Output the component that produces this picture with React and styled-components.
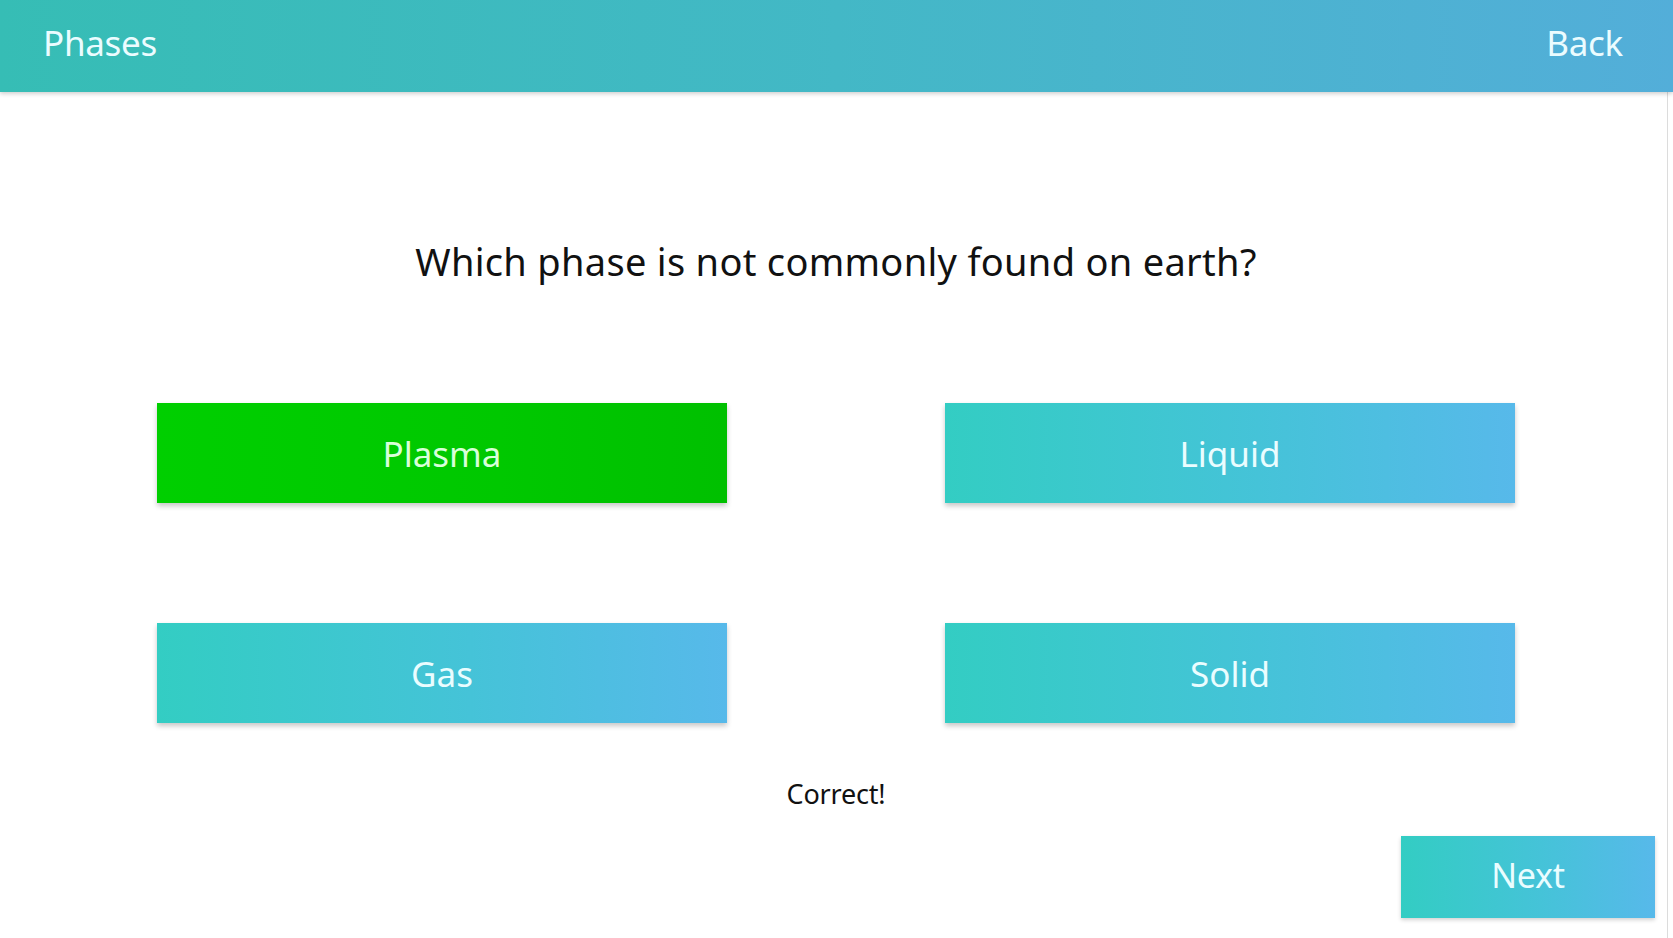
import styled, { createGlobalStyle } from 'styled-components';

const GlobalStyle = createGlobalStyle`
  html, body {
    margin: 0;
    padding: 0;
    background: #ffffff;
  }
  body {
    font-family: 'Noto Sans', 'Open Sans', sans-serif;
  }
`;

const teal = 'linear-gradient(90deg, #33cdc3 0%, #45c3d8 55%, #57b9ea 100%)';

const Screen = styled.div`
  height: 100vh;
  display: flex;
  flex-direction: column;
  overflow: hidden;
`;

const Header = styled.header`
  height: 92px;
  flex-shrink: 0;
  display: flex;
  align-items: center;
  justify-content: space-between;
  padding: 0 50px 0 43px;
  background: linear-gradient(90deg, #36bdb5 0%, #43b8c6 50%, #53aed9 100%);
  box-shadow: 0 2px 4px rgba(0, 0, 0, 0.18);
  position: relative;
  z-index: 1;
`;

const HeaderText = styled.span`
  color: #ebfcff;
  font-size: 35px;
  letter-spacing: -0.3px;
  line-height: 1;
  padding-bottom: 8px;
`;

const Main = styled.main`
  flex: 1;
  margin-right: 5px;
  border-right: 1px solid #dcdcdc;
  display: flex;
  flex-direction: column;
  align-items: center;
  padding: 142px 0 20px 5px;
`;

const Question = styled.h1`
  margin: 0;
  font-weight: 400;
  font-size: 38px;
  line-height: 54px;
  letter-spacing: 0.3px;
  color: #111111;
`;

const Answers = styled.div`
  display: grid;
  grid-template-columns: 570px 570px;
  grid-auto-rows: 100px;
  column-gap: 218px;
  row-gap: 120px;
  margin-top: 115px;
`;

const Answer = styled.button`
  border: none;
  margin: 0;
  padding: 0;
  font-family: inherit;
  font-size: 35px;
  letter-spacing: 0;
  color: ${(p) => (p.$correct ? '#d9ffd9' : '#eafdff')};
  background: ${(p) =>
    p.$correct ? 'linear-gradient(90deg, #00cf00 0%, #00c800 60%, #00c000 100%)' : teal};
  box-shadow: 0 3px 5px rgba(0, 0, 0, 0.22);
  cursor: pointer;
`;

const Feedback = styled.div`
  margin-top: 53px;
  font-size: 27px;
  line-height: 36px;
  letter-spacing: -0.2px;
  color: #111111;
`;

const Footer = styled.div`
  align-self: stretch;
  display: flex;
  justify-content: flex-end;
  margin-top: 24px;
  padding-right: 12px;
`;

const NextButton = styled.button`
  width: 254px;
  height: 82px;
  border: none;
  padding: 0 0 4px;
  font-family: inherit;
  font-size: 34px;
  letter-spacing: -0.3px;
  color: #eafdff;
  background: ${teal};
  box-shadow: 0 2px 4px rgba(0, 0, 0, 0.18);
  cursor: pointer;
`;

const answers = [
  { label: 'Plasma', correct: true },
  { label: 'Liquid' },
  { label: 'Gas' },
  { label: 'Solid' },
];

export default function App() {
  return (
    <Screen>
      <GlobalStyle />
      <Header>
        <HeaderText>Phases</HeaderText>
        <HeaderText>Back</HeaderText>
      </Header>
      <Main>
        <Question>Which phase is not commonly found on earth?</Question>
        <Answers>
          {answers.map((a) => (
            <Answer key={a.label} $correct={a.correct}>
              {a.label}
            </Answer>
          ))}
        </Answers>
        <Feedback>Correct!</Feedback>
        <Footer>
          <NextButton>Next</NextButton>
        </Footer>
      </Main>
    </Screen>
  );
}
